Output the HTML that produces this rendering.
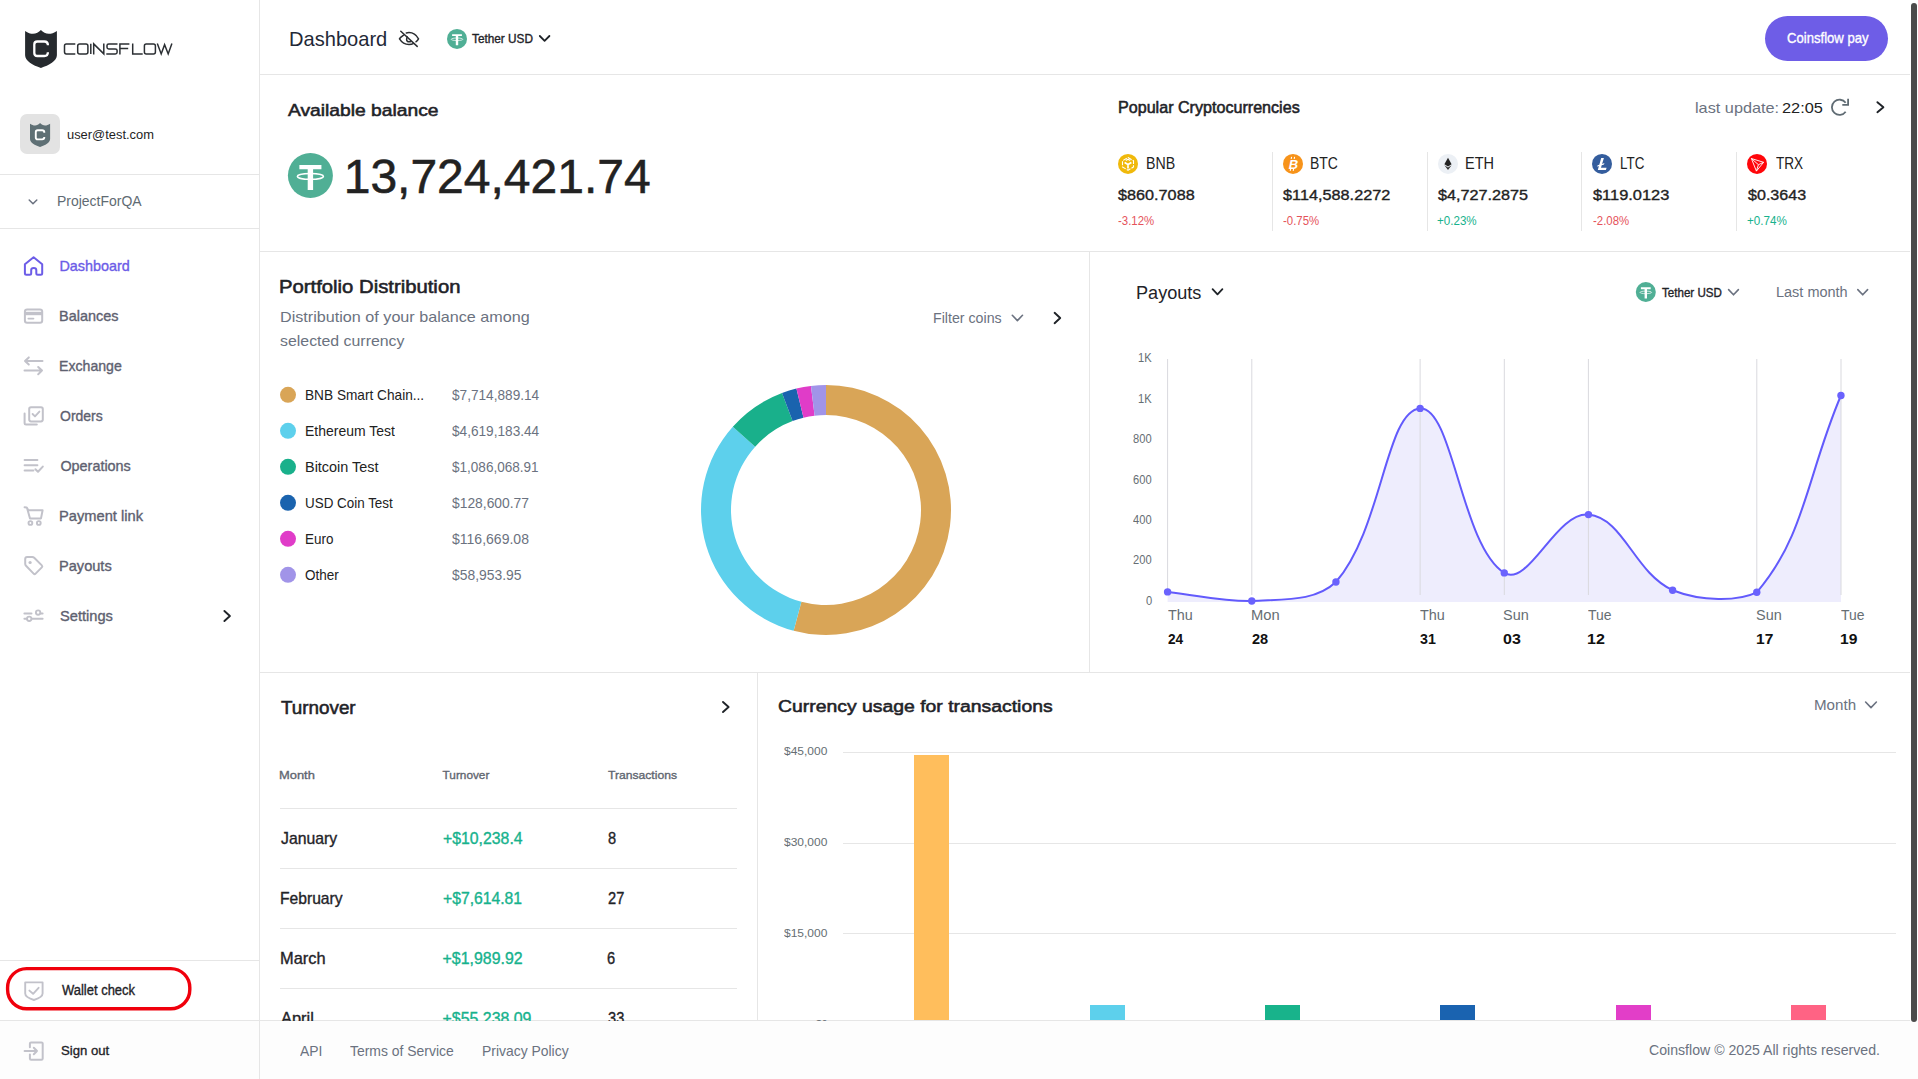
<!DOCTYPE html><html><head><meta charset="utf-8"><style>
html,body{margin:0;padding:0;}
body{width:1918px;height:1079px;overflow:hidden;background:#fff;position:relative;font-family:"Liberation Sans", sans-serif;}
.t{position:absolute;white-space:nowrap;line-height:normal;transform-origin:0 0;}
.ln{position:absolute;background:#e6e6e6;}
svg{position:absolute;overflow:visible;}
</style></head><body>

<div style="position:absolute;left:0;top:1021px;width:1918px;height:58px;background:#fdfdfd"></div>
<div class="ln" style="left:259px;top:0px;width:1px;height:1079px;background:#e6e6e6"></div>
<div class="ln" style="left:0px;top:174px;width:259px;height:1px;background:#e6e6e6"></div>
<div class="ln" style="left:0px;top:228px;width:259px;height:1px;background:#e6e6e6"></div>
<div class="ln" style="left:0px;top:960px;width:259px;height:1px;background:#e6e6e6"></div>
<div class="ln" style="left:0px;top:1020px;width:1910px;height:1px;background:#e6e6e6"></div>
<div class="ln" style="left:260px;top:74px;width:1650px;height:1px;background:#e6e6e6"></div>
<div class="ln" style="left:260px;top:251px;width:1650px;height:1px;background:#e6e6e6"></div>
<div class="ln" style="left:260px;top:672px;width:1650px;height:1px;background:#e6e6e6"></div>
<div class="ln" style="left:1089px;top:252px;width:1px;height:420px;background:#e6e6e6"></div>
<div class="ln" style="left:757px;top:673px;width:1px;height:347px;background:#e6e6e6"></div>
<div style="position:absolute;left:20px;top:114px;width:40px;height:40px;border-radius:7px;background:#e3e3e3"></div>
<div style="position:absolute;left:1765px;top:16px;width:123px;height:45px;border-radius:23px;background:#6e5de7"></div>
<div class="ln" style="left:1272px;top:152px;width:1px;height:79px;background:#e6e6e6"></div>
<div class="ln" style="left:1427px;top:152px;width:1px;height:79px;background:#e6e6e6"></div>
<div class="ln" style="left:1581px;top:152px;width:1px;height:79px;background:#e6e6e6"></div>
<div class="ln" style="left:1736px;top:152px;width:1px;height:79px;background:#e6e6e6"></div>
<div class="ln" style="left:280px;top:808px;width:457px;height:1px;background:#e6e6e6"></div>
<div class="ln" style="left:280px;top:868px;width:457px;height:1px;background:#e6e6e6"></div>
<div class="ln" style="left:280px;top:928px;width:457px;height:1px;background:#e6e6e6"></div>
<div class="ln" style="left:280px;top:988px;width:457px;height:1px;background:#e6e6e6"></div>
<div class="ln" style="left:843px;top:752px;width:1053px;height:1px;background:#e6e6e6"></div>
<div class="ln" style="left:843px;top:843px;width:1053px;height:1px;background:#e6e6e6"></div>
<div class="ln" style="left:843px;top:933px;width:1053px;height:1px;background:#e6e6e6"></div>
<div class="ln" style="left:843px;top:1024px;width:1053px;height:1px;background:#e6e6e6"></div>
<div style="position:absolute;left:914.2px;top:755px;width:35px;height:265px;background:#ffbe5c"></div>
<div style="position:absolute;left:1089.6px;top:1005px;width:35px;height:15px;background:#5dd0ec"></div>
<div style="position:absolute;left:1265.0px;top:1005px;width:35px;height:15px;background:#18b38b"></div>
<div style="position:absolute;left:1440.4px;top:1005px;width:35px;height:15px;background:#1a63b0"></div>
<div style="position:absolute;left:1615.8px;top:1005px;width:35px;height:15px;background:#e23ec8"></div>
<div style="position:absolute;left:1791.2px;top:1005px;width:35px;height:15px;background:#ff6384"></div>
<div style="position:absolute;left:1911px;top:3px;width:6px;height:1019px;border-radius:3px;background:#4b4b4b"></div>
<svg width="1918" height="1079" style="left:0;top:0"><path d="M25.1,30.9 C28,32.8 30.5,33.8 33,33.8 C36,33.8 38.8,32 40.9,29.9 C43,32 45.8,33.8 48.8,33.8 C51.3,33.8 54,32.8 56.9,30.9 L56.9,55.3 C56.9,61 49,65.5 40.9,67.9 C32.8,65.5 25.1,61 25.1,55.3 Z" fill="#262a2e"/><path d="M47.9,45.3 Q47.9,41.5 44.3,41.5 L37.3,41.5 Q34.3,41.5 34.3,44.5 L34.3,53 Q34.3,56 37.3,56 L44.3,56 Q47.9,56 47.9,52.3" fill="none" stroke="#fff" stroke-width="2.3"/><path d="M75.3,43.9 L66.3,43.9 Q64.5,43.9 64.5,45.699999999999996 L64.5,52.1 Q64.5,53.9 66.3,53.9 L75.3,53.9 M79.7,43.9 L86,43.9 Q87.9,43.9 87.9,45.9 L87.9,51.9 Q87.9,53.9 86,53.9 L79.7,53.9 Q77.7,53.9 77.7,51.9 L77.7,45.9 Q77.7,43.9 79.7,43.9 Z M90.8,43.699999999999996 L90.8,54.1 M93.7,54.4 L93.7,43.9 L103.8,53.9 L103.8,43.4 M117.5,43.9 L108.8,43.9 Q107,43.9 107,45.5 L107,47.3 Q107,48.9 108.8,48.9 L115.3,48.9 Q117.1,48.9 117.1,50.5 L117.1,52.3 Q117.1,53.9 115.3,53.9 L106.3,53.9 M119.9,54.4 L119.9,43.9 L129.4,43.9 M119.9,48.6 L128.2,48.6 M132.7,43.4 L132.7,53.9 L142.7,53.9 M146.2,43.9 L153.5,43.9 Q155.4,43.9 155.4,45.9 L155.4,51.9 Q155.4,53.9 153.5,53.9 L146.2,53.9 Q144.4,53.9 144.4,51.9 L144.4,45.9 Q144.4,43.9 146.2,43.9 Z M157.3,43.6 L161.2,53.9 L164.6,44.699999999999996 L168.2,53.9 L171.9,43.6" fill="none" stroke="#2b2f33" stroke-width="1.5" stroke-linejoin="miter"/><g transform="translate(30,123) scale(0.6286)"><path d="M0,1.2 C3,3 5.4,4 8,4 C11,4 13.9,2.1 16,0 C18.1,2.1 21,4 24,4 C26.6,4 29,3 32,1.2 L32,25.4 C32,31 24,35.6 16,38 C8,35.6 0,31 0,25.4 Z" fill="#5f7075"/><path d="M22.8,15.4 Q22.8,11.6 19.2,11.6 L12.2,11.6 Q9.2,11.6 9.2,14.6 L9.2,23.1 Q9.2,26.1 12.2,26.1 L19.2,26.1 Q22.8,26.1 22.8,22.4" fill="none" stroke="#fff" stroke-width="3"/></g><path d="M29.2,200 L33,203.8 L36.8,200" fill="none" stroke="#6b7280" stroke-width="1.5" stroke-linecap="round" stroke-linejoin="round"/><path d="M24.9,264.2 L33.6,257.2 L42.2,264.2 L42.2,273.3 Q42.2,274.8 40.7,274.8 L37.8,274.8 Q36.3,274.8 36.3,273.3 L36.3,269.9 Q36.3,267.9 33.75,267.9 Q31.2,267.9 31.2,269.9 L31.2,273.3 Q31.2,274.8 29.7,274.8 L26.4,274.8 Q24.9,274.8 24.9,273.3 Z" fill="none" stroke="#6c5ce7" stroke-width="2" stroke-linejoin="round"/><rect x="24.9" y="309.4" width="17.3" height="13.4" rx="2.2" fill="none" stroke="#c2c2ca" stroke-width="2"/><rect x="24.9" y="311.8" width="17.3" height="3.4" fill="#c2c2ca"/><path d="M28.4,318.6 L33.4,318.6" stroke="#c2c2ca" stroke-width="1.9" stroke-linecap="round"/><path d="M42.5,361 L25,361 M28.8,357.4 L25,361 L28.8,364.6 M24.5,370.6 L42,370.6 M38.2,367 L42,370.6 L38.2,374.2" fill="none" stroke="#c2c2ca" stroke-width="2" stroke-linecap="round" stroke-linejoin="round"/><rect x="29.2" y="407.2" width="13.6" height="14.2" rx="1.8" fill="none" stroke="#c2c2ca" stroke-width="2"/><path d="M24.6,413.5 L24.6,423.3 Q24.6,424.6 25.9,424.6 L36.8,424.6" fill="none" stroke="#c2c2ca" stroke-width="2" stroke-linecap="round"/><path d="M32.6,414 L35,416.4 L39.4,411.6" fill="none" stroke="#c2c2ca" stroke-width="1.9" stroke-linecap="round" stroke-linejoin="round"/><path d="M24.6,460 L37.4,460 M24.6,465.2 L37.4,465.2 M24.6,470.6 L33.4,470.6 M35.4,469.2 L38,471.8 L42.8,466.6" fill="none" stroke="#c2c2ca" stroke-width="2" stroke-linecap="round" stroke-linejoin="round"/><path d="M24.6,507.2 L26.6,507.4 L28.4,510.2 L42.6,510.2 L41,518.4 L30,518.4 L27.2,508.6" fill="none" stroke="#c2c2ca" stroke-width="2" stroke-linecap="round" stroke-linejoin="round"/><circle cx="30.4" cy="523" r="1.9" fill="none" stroke="#c2c2ca" stroke-width="1.9"/><circle cx="38.8" cy="523" r="1.9" fill="none" stroke="#c2c2ca" stroke-width="1.9"/><path d="M25.2,559 L25.2,563.8 Q25.2,565 26,565.8 L33.6,573.6 Q34.6,574.6 35.6,573.6 L41.8,567.4 Q42.8,566.4 41.8,565.4 L34.2,557.8 Q33.4,557 32.2,557 L27.2,557 Q25.2,557 25.2,559 Z" fill="none" stroke="#c2c2ca" stroke-width="2" stroke-linejoin="round"/><circle cx="30.1" cy="562.5" r="1.6" fill="#c2c2ca"/><path d="M24.4,613.4 L31.5,613.4 M40.6,613.4 L42.6,613.4 M24.4,618.8 L26.8,618.8 M32.2,618.8 L42.6,618.8" fill="none" stroke="#c2c2ca" stroke-width="2" stroke-linecap="round"/><circle cx="38.1" cy="612.6" r="2.2" fill="none" stroke="#c2c2ca" stroke-width="1.9"/><circle cx="29.2" cy="618.8" r="2.2" fill="none" stroke="#c2c2ca" stroke-width="1.9"/><path d="M224.4,611 L229.9,616 L224.4,621" fill="none" stroke="#1f2328" stroke-width="1.9" stroke-linecap="round" stroke-linejoin="round"/><rect x="7.6" y="968.6" width="182.2" height="40.2" rx="19" fill="none" stroke="#f0000c" stroke-width="3.4"/><path d="M25.2,982.4 L42.6,982.4 L42.6,993.6 Q42.6,997.4 33.9,1000 Q25.2,997.4 25.2,993.6 Z" fill="none" stroke="#c2c2ca" stroke-width="1.9" stroke-linejoin="round"/><path d="M29.4,990.6 L33.1,993.8 L38.6,987.8" fill="none" stroke="#c2c2ca" stroke-width="1.9" stroke-linecap="round" stroke-linejoin="round"/><path d="M29.9,1047.2 L29.9,1043.6 Q29.9,1042.4 31.1,1042.4 L41.5,1042.4 Q42.7,1042.4 42.7,1043.6 L42.7,1058.6 Q42.7,1059.8 41.5,1059.8 L31.1,1059.8 Q29.9,1059.8 29.9,1058.6 L29.9,1054.6 M24.6,1051 L37,1051 M33.8,1047.8 L37,1051 L33.8,1054.2" fill="none" stroke="#c2c2ca" stroke-width="2" stroke-linecap="round" stroke-linejoin="round"/><path d="M400.8,31.2 L417.2,46.4" stroke="#2a2d31" stroke-width="1.5" stroke-linecap="round"/><path d="M403.6,35.2 Q400.3,37.4 399.5,38.8 Q403,44.4 409,44.4 Q411.6,44.4 413.2,43.6 M406.3,32.9 Q407.7,32.6 409,32.6 Q415,32.6 418.5,38.8 Q417.6,40.4 416,41.8" fill="none" stroke="#2a2d31" stroke-width="1.5" stroke-linecap="round"/><path d="M407.8,36.6 Q406.6,37.6 406.6,39.2 Q406.6,41.8 409.2,41.8 Q410.2,41.8 411,41.3" fill="none" stroke="#2a2d31" stroke-width="1.5"/><g transform="translate(457,38.9) scale(1.0)"><circle cx="0" cy="0" r="10" fill="#50af95"/><path d="M-4.9,-4.7 L4.9,-4.7 L4.9,-2.8 L1.2,-2.8 L1.2,6.4 L-1.2,6.4 L-1.2,-2.8 L-4.9,-2.8 Z" fill="#fff"/><ellipse cx="0" cy="0.4" rx="5.8" ry="1.3" fill="none" stroke="#fff" stroke-width="0.7"/></g><path d="M539.8,36 L544.6,40.8 L549.4,36" fill="none" stroke="#1f2328" stroke-width="1.8" stroke-linecap="round" stroke-linejoin="round"/><path d="M1845.65,111.77 A7.6,7.6 0 1 1 1845.65,102.83" fill="none" stroke="#5f6b73" stroke-width="1.8"/><path d="M1842.3,104.8 L1848.1,104.8 L1848.1,98.8" fill="none" stroke="#5f6b73" stroke-width="1.8" stroke-linejoin="miter"/><path d="M1877.4,102.2 L1883.4,107.2 L1877.4,112.2" fill="none" stroke="#1f2328" stroke-width="1.9" stroke-linecap="round" stroke-linejoin="round"/><g transform="translate(310.4,175.5) scale(2.25)"><circle cx="0" cy="0" r="10" fill="#50af95"/><path d="M-4.9,-4.7 L4.9,-4.7 L4.9,-2.8 L1.2,-2.8 L1.2,6.4 L-1.2,6.4 L-1.2,-2.8 L-4.9,-2.8 Z" fill="#fff"/><ellipse cx="0" cy="0.4" rx="5.8" ry="1.3" fill="none" stroke="#fff" stroke-width="0.7"/></g><g transform="translate(1128,163.9)"><circle r="10" fill="#f0b90b"/><g fill="none" stroke="#fff" stroke-linejoin="round"><path d="M0,-6.3 L5.5,-3.15 L5.5,3.15 L0,6.3 L-5.5,3.15 L-5.5,-3.15 Z" stroke-width="1.1" stroke-dasharray="4.2 1.2"/><path d="M0,0.6 L0,4.6 M0,0.6 L-3.4,-1.4 M0,0.6 L3.4,-1.4" stroke-width="1.7"/><path d="M-2.2,-3.4 L0,-4.6 L2.2,-3.4" stroke-width="1.2"/></g></g><g transform="translate(1293,163.9)"><circle r="10" fill="#f7931a"/><text x="0.6" y="4.6" text-anchor="middle" font-family="Liberation Sans" font-weight="700" font-size="13" fill="#fff" transform="skewX(-12)">B</text><path d="M-1.4,-7 L-1.8,-5 M1.6,-7 L1.2,-5 M-2.4,5 L-2.8,7 M0.6,5 L0.2,7" stroke="#fff" stroke-width="1.1"/></g><g transform="translate(1448,163.9)"><circle r="10" fill="#ecf0f5"/><path d="M0,-6.2 L-3.6,0.4 L0,2.6 L3.6,0.4 Z" fill="#222"/><path d="M-3.6,1.4 L0,6.2 L3.6,1.4 L0,3.6 Z" fill="#333"/></g><g transform="translate(1602,163.9)"><circle r="10" fill="#345d9d"/><path d="M-0.8,-6 L1.9,-6 L0.1,0 L2.4,-0.8 L2.0,0.6 L-0.3,1.4 L-1.0,3.9 L4.6,3.9 L3.9,6.2 L-4.2,6.2 L-3.1,2.2 L-4.8,2.8 L-4.4,1.4 L-2.7,0.8 Z" fill="#fff"/></g><g transform="translate(1757,163.9)"><circle r="10" fill="#ff060a"/><path d="M-5.6,-5.4 L6.6,-1.6 L-0.6,7.2 Z M-5.6,-5.4 L1.4,0.8 L6.6,-1.6 M1.4,0.8 L-0.6,7.2" fill="none" stroke="#fff" stroke-width="0.9" stroke-linejoin="round"/></g><circle cx="288" cy="394.8" r="8" fill="#d9a557"/><circle cx="288" cy="430.8" r="8" fill="#5dd0ec"/><circle cx="288" cy="466.8" r="8" fill="#19b08b"/><circle cx="288" cy="502.8" r="8" fill="#1a63ae"/><circle cx="288" cy="538.8" r="8" fill="#e03cc8"/><circle cx="288" cy="574.8" r="8" fill="#a194e8"/><path d="M1012.3,315.3 L1017.4,320.6 L1022.5,315.3" fill="none" stroke="#6b7280" stroke-width="1.6" stroke-linecap="round" stroke-linejoin="round"/><path d="M1054.6,312.8 L1060.2,318 L1054.6,323.2" fill="none" stroke="#1f2328" stroke-width="1.9" stroke-linecap="round" stroke-linejoin="round"/><path d="M826.00,385.00 A125,125 0 1 1 793.65,630.74 L801.41,601.76 A95,95 0 1 0 826.00,415.00 Z" fill="#d9a557"/><path d="M793.65,630.74 A125,125 0 0 1 732.82,426.68 L755.18,446.68 A95,95 0 0 0 801.41,601.76 Z" fill="#5dd0ec"/><path d="M732.82,426.68 A125,125 0 0 1 782.02,392.99 L792.58,421.07 A95,95 0 0 0 755.18,446.68 Z" fill="#19b08b"/><path d="M782.02,392.99 A125,125 0 0 1 796.40,388.56 L803.50,417.70 A95,95 0 0 0 792.58,421.07 Z" fill="#1a63ae"/><path d="M796.40,388.56 A125,125 0 0 1 810.98,385.91 L814.59,415.69 A95,95 0 0 0 803.50,417.70 Z" fill="#e03cc8"/><path d="M810.98,385.91 A125,125 0 0 1 826.00,385.00 L826.00,415.00 A95,95 0 0 0 814.59,415.69 Z" fill="#a194e8"/><path d="M1212.6,289.2 L1217.5,294.4 L1222.4,289.2" fill="none" stroke="#1f2328" stroke-width="1.8" stroke-linecap="round" stroke-linejoin="round"/><g transform="translate(1645.8,292) scale(1.0)"><circle cx="0" cy="0" r="10" fill="#50af95"/><path d="M-4.9,-4.7 L4.9,-4.7 L4.9,-2.8 L1.2,-2.8 L1.2,6.4 L-1.2,6.4 L-1.2,-2.8 L-4.9,-2.8 Z" fill="#fff"/><ellipse cx="0" cy="0.4" rx="5.8" ry="1.3" fill="none" stroke="#fff" stroke-width="0.7"/></g><path d="M1728.6,289.6 L1733.5,294.8 L1738.4,289.6" fill="none" stroke="#6b7280" stroke-width="1.6" stroke-linecap="round" stroke-linejoin="round"/><path d="M1857.8,289.6 L1862.7,294.8 L1867.6,289.6" fill="none" stroke="#6b7280" stroke-width="1.6" stroke-linecap="round" stroke-linejoin="round"/><path d="M1167.60,591.90 C1201.27,595.54 1218.42,601.50 1251.77,601.00 C1285.76,599.00 1315.13,601.50 1335.94,582.00 C1382.47,528.77 1385.72,410.26 1420.11,408.40 C1453.05,406.62 1460.95,545.57 1504.28,572.90 C1528.29,588.05 1556.46,511.31 1588.45,514.60 C1623.80,518.23 1634.01,572.38 1672.62,590.20 C1701.35,601.50 1737.78,601.50 1756.79,592.30 C1805.12,536.41 1807.29,474.22 1840.96,395.50 L1840.96,602.00 L1167.60,602.00 Z" fill="#eeedfd"/><path d="M1167.6,359 L1167.6,595" stroke="#d9d9de" stroke-width="1"/><path d="M1251.8,359 L1251.8,595" stroke="#d9d9de" stroke-width="1"/><path d="M1420.1,359 L1420.1,595" stroke="#d9d9de" stroke-width="1"/><path d="M1504.3,359 L1504.3,595" stroke="#d9d9de" stroke-width="1"/><path d="M1588.4,359 L1588.4,595" stroke="#d9d9de" stroke-width="1"/><path d="M1756.8,359 L1756.8,595" stroke="#d9d9de" stroke-width="1"/><path d="M1841.0,359 L1841.0,595" stroke="#d9d9de" stroke-width="1"/><path d="M1167.60,591.90 C1201.27,595.54 1218.42,601.50 1251.77,601.00 C1285.76,599.00 1315.13,601.50 1335.94,582.00 C1382.47,528.77 1385.72,410.26 1420.11,408.40 C1453.05,406.62 1460.95,545.57 1504.28,572.90 C1528.29,588.05 1556.46,511.31 1588.45,514.60 C1623.80,518.23 1634.01,572.38 1672.62,590.20 C1701.35,601.50 1737.78,601.50 1756.79,592.30 C1805.12,536.41 1807.29,474.22 1840.96,395.50" fill="none" stroke="#625afc" stroke-width="2"/><circle cx="1167.60" cy="591.90" r="3.7" fill="#6a62fd"/><circle cx="1251.77" cy="601.00" r="3.7" fill="#6a62fd"/><circle cx="1335.94" cy="582.00" r="3.7" fill="#6a62fd"/><circle cx="1420.11" cy="408.40" r="3.7" fill="#6a62fd"/><circle cx="1504.28" cy="572.90" r="3.7" fill="#6a62fd"/><circle cx="1588.45" cy="514.60" r="3.7" fill="#6a62fd"/><circle cx="1672.62" cy="590.20" r="3.7" fill="#6a62fd"/><circle cx="1756.79" cy="592.30" r="3.7" fill="#6a62fd"/><circle cx="1840.96" cy="395.50" r="3.7" fill="#6a62fd"/><path d="M723,702 L728.6,707 L723,712" fill="none" stroke="#1f2328" stroke-width="1.9" stroke-linecap="round" stroke-linejoin="round"/><path d="M1865.6,702 L1871,707.6 L1876.4,702" fill="none" stroke="#6b7280" stroke-width="1.6" stroke-linecap="round" stroke-linejoin="round"/></svg>
<div class="t" style="left:67.33px;top:128.00px;font-size:12.00px;color:#1e1e1e;transform:scaleX(1.0747);">user@test.com</div>
<div class="t" style="left:56.99px;top:194.00px;font-size:13.80px;color:#5f6b73;transform:scaleX(1.0122);">ProjectForQA</div>
<div class="t" style="left:59.40px;top:258.00px;font-size:14.40px;color:#6c5ce7;-webkit-text-stroke:0.35px #6c5ce7;">Dashboard</div>
<div class="t" style="left:59.39px;top:308.00px;font-size:14.40px;color:#5e6170;-webkit-text-stroke:0.35px #5e6170;transform:scaleX(1.0052);">Balances</div>
<div class="t" style="left:59.42px;top:358.00px;font-size:14.40px;color:#5e6170;-webkit-text-stroke:0.35px #5e6170;transform:scaleX(0.9810);">Exchange</div>
<div class="t" style="left:60.40px;top:408.00px;font-size:14.40px;color:#5e6170;-webkit-text-stroke:0.35px #5e6170;transform:scaleX(0.9727);">Orders</div>
<div class="t" style="left:60.40px;top:458.00px;font-size:14.40px;color:#5e6170;-webkit-text-stroke:0.35px #5e6170;">Operations</div>
<div class="t" style="left:59.38px;top:508.00px;font-size:14.40px;color:#5e6170;-webkit-text-stroke:0.35px #5e6170;transform:scaleX(1.0195);">Payment link</div>
<div class="t" style="left:59.39px;top:558.00px;font-size:14.40px;color:#5e6170;-webkit-text-stroke:0.35px #5e6170;transform:scaleX(1.0137);">Payouts</div>
<div class="t" style="left:60.40px;top:608.00px;font-size:14.40px;color:#5e6170;-webkit-text-stroke:0.35px #5e6170;transform:scaleX(1.0173);">Settings</div>
<div class="t" style="left:61.70px;top:982.00px;font-size:14.00px;color:#1f2328;-webkit-text-stroke:0.35px #1f2328;transform:scaleX(0.9266);">Wallet check</div>
<div class="t" style="left:288.70px;top:27.00px;font-size:21.10px;color:#1f2937;transform:scaleX(0.9520);">Dashboard</div>
<div class="t" style="left:472.00px;top:32.00px;font-size:11.90px;color:#1f2328;-webkit-text-stroke:0.35px #1f2328;transform:scaleX(0.9918);">Tether USD</div>
<div class="t" style="left:1786.80px;top:30.00px;font-size:14.30px;color:#ffffff;-webkit-text-stroke:0.35px #ffffff;transform:scaleX(0.9169);">Coinsflow pay</div>
<div class="t" style="left:288.30px;top:101.00px;font-size:16.60px;color:#1f2328;-webkit-text-stroke:0.55px #1f2328;transform:scaleX(1.1597);">Available balance</div>
<div class="t" style="left:343.70px;top:149.00px;font-size:48.00px;color:#222222;-webkit-text-stroke:0.55px #222222;">13,724,421.74</div>
<div class="t" style="left:1117.89px;top:99.00px;font-size:15.90px;color:#1f2328;-webkit-text-stroke:0.55px #1f2328;transform:scaleX(1.0135);">Popular Cryptocurrencies</div>
<div class="t" style="left:1695.08px;top:100.00px;font-size:14.60px;color:#6b7280;transform:scaleX(1.1151);">last update:</div>
<div class="t" style="left:1781.74px;top:99.00px;font-size:15.40px;color:#222222;transform:scaleX(1.0622);">22:05</div>
<div class="t" style="left:1145.59px;top:155.00px;font-size:15.60px;color:#222222;transform:scaleX(0.9097);">BNB</div>
<div class="t" style="left:1310.40px;top:155.00px;font-size:15.60px;color:#222222;transform:scaleX(0.8967);">BTC</div>
<div class="t" style="left:1465.17px;top:155.00px;font-size:15.60px;color:#222222;transform:scaleX(0.9310);">ETH</div>
<div class="t" style="left:1620.24px;top:155.00px;font-size:15.60px;color:#222222;transform:scaleX(0.8593);">LTC</div>
<div class="t" style="left:1775.50px;top:155.00px;font-size:15.60px;color:#222222;transform:scaleX(0.8710);">TRX</div>
<div class="t" style="left:1118.30px;top:187.00px;font-size:14.70px;color:#222222;-webkit-text-stroke:0.35px #222222;transform:scaleX(1.1043);">$860.7088</div>
<div class="t" style="left:1283.10px;top:187.00px;font-size:14.70px;color:#222222;-webkit-text-stroke:0.35px #222222;transform:scaleX(1.1072);">$114,588.2272</div>
<div class="t" style="left:1438.00px;top:187.00px;font-size:14.70px;color:#222222;-webkit-text-stroke:0.35px #222222;transform:scaleX(1.1025);">$4,727.2875</div>
<div class="t" style="left:1593.00px;top:187.00px;font-size:14.70px;color:#222222;-webkit-text-stroke:0.35px #222222;transform:scaleX(1.1162);">$119.0123</div>
<div class="t" style="left:1747.70px;top:187.00px;font-size:14.70px;color:#222222;-webkit-text-stroke:0.35px #222222;transform:scaleX(1.0943);">$0.3643</div>
<div class="t" style="left:1118.30px;top:214.00px;font-size:12.40px;color:#e5535b;transform:scaleX(0.9205);">-3.12%</div>
<div class="t" style="left:1283.10px;top:214.00px;font-size:12.40px;color:#e5535b;transform:scaleX(0.9205);">-0.75%</div>
<div class="t" style="left:1437.06px;top:214.00px;font-size:12.40px;color:#17b28d;transform:scaleX(0.9366);">+0.23%</div>
<div class="t" style="left:1593.00px;top:214.00px;font-size:12.40px;color:#e5535b;transform:scaleX(0.9205);">-2.08%</div>
<div class="t" style="left:1746.76px;top:214.00px;font-size:12.40px;color:#17b28d;transform:scaleX(0.9415);">+0.74%</div>
<div class="t" style="left:278.97px;top:277.00px;font-size:18.00px;color:#1f2328;-webkit-text-stroke:0.55px #1f2328;transform:scaleX(1.1264);">Portfolio Distribution</div>
<div class="t" style="left:279.52px;top:308.00px;font-size:15.00px;color:#6b7280;transform:scaleX(1.0774);">Distribution of your balance among</div>
<div class="t" style="left:279.54px;top:332.00px;font-size:15.00px;color:#6b7280;transform:scaleX(1.0590);">selected currency</div>
<div class="t" style="left:304.74px;top:387.00px;font-size:14.30px;color:#222222;transform:scaleX(0.9553);">BNB Smart Chain...</div>
<div class="t" style="left:452.10px;top:387.00px;font-size:14.30px;color:#6b7280;transform:scaleX(0.9538);">$7,714,889.14</div>
<div class="t" style="left:304.72px;top:423.00px;font-size:14.30px;color:#222222;transform:scaleX(0.9769);">Ethereum Test</div>
<div class="t" style="left:452.10px;top:423.00px;font-size:14.30px;color:#6b7280;transform:scaleX(0.9538);">$4,619,183.44</div>
<div class="t" style="left:304.69px;top:459.00px;font-size:14.30px;color:#222222;transform:scaleX(1.0097);">Bitcoin Test</div>
<div class="t" style="left:452.10px;top:459.00px;font-size:14.30px;color:#6b7280;transform:scaleX(0.9473);">$1,086,068.91</div>
<div class="t" style="left:304.76px;top:495.00px;font-size:14.30px;color:#222222;transform:scaleX(0.9387);">USD Coin Test</div>
<div class="t" style="left:452.10px;top:495.00px;font-size:14.30px;color:#6b7280;transform:scaleX(0.9684);">$128,600.77</div>
<div class="t" style="left:304.76px;top:531.00px;font-size:14.30px;color:#222222;transform:scaleX(0.9414);">Euro</div>
<div class="t" style="left:452.10px;top:531.00px;font-size:14.30px;color:#6b7280;transform:scaleX(0.9808);">$116,669.08</div>
<div class="t" style="left:304.75px;top:567.00px;font-size:14.30px;color:#222222;transform:scaleX(0.9457);">Other</div>
<div class="t" style="left:452.10px;top:567.00px;font-size:14.30px;color:#6b7280;transform:scaleX(0.9718);">$58,953.95</div>
<div class="t" style="left:932.79px;top:310.00px;font-size:14.10px;color:#6b7280;transform:scaleX(1.0075);">Filter coins</div>
<div class="t" style="left:1136.47px;top:283.00px;font-size:17.60px;color:#1f2328;transform:scaleX(1.0290);">Payouts</div>
<div class="t" style="left:1661.60px;top:286.00px;font-size:12.10px;color:#1f2328;-webkit-text-stroke:0.35px #1f2328;transform:scaleX(0.9581);">Tether USD</div>
<div class="t" style="left:1776.01px;top:284.00px;font-size:14.70px;color:#6b7280;transform:scaleX(0.9859);">Last month</div>
<div class="t" style="left:1137.70px;top:351.00px;font-size:12.10px;color:#666e73;transform:scaleX(0.9200);">1K</div>
<div class="t" style="left:1137.70px;top:392.00px;font-size:12.10px;color:#666e73;transform:scaleX(0.9200);">1K</div>
<div class="t" style="left:1133.10px;top:432.00px;font-size:12.10px;color:#666e73;transform:scaleX(0.9200);">800</div>
<div class="t" style="left:1133.10px;top:473.00px;font-size:12.10px;color:#666e73;transform:scaleX(0.9200);">600</div>
<div class="t" style="left:1133.10px;top:513.00px;font-size:12.10px;color:#666e73;transform:scaleX(0.9200);">400</div>
<div class="t" style="left:1133.10px;top:553.00px;font-size:12.10px;color:#666e73;transform:scaleX(0.9200);">200</div>
<div class="t" style="left:1145.98px;top:594.00px;font-size:12.10px;color:#666e73;transform:scaleX(0.9200);">0</div>
<div class="t" style="left:1167.60px;top:606.00px;font-size:15.10px;color:#666e73;transform:scaleX(0.9520);">Thu</div>
<div class="t" style="left:1167.60px;top:631.00px;font-size:14.90px;color:#111111;font-weight:700;transform:scaleX(0.9176);">24</div>
<div class="t" style="left:1250.79px;top:606.00px;font-size:15.10px;color:#666e73;transform:scaleX(0.9761);">Mon</div>
<div class="t" style="left:1251.77px;top:631.00px;font-size:14.90px;color:#111111;font-weight:700;transform:scaleX(0.9769);">28</div>
<div class="t" style="left:1420.11px;top:606.00px;font-size:15.10px;color:#666e73;transform:scaleX(0.9556);">Thu</div>
<div class="t" style="left:1420.11px;top:631.00px;font-size:14.90px;color:#111111;font-weight:700;transform:scaleX(0.9556);">31</div>
<div class="t" style="left:1503.32px;top:606.00px;font-size:15.10px;color:#666e73;transform:scaleX(0.9568);">Sun</div>
<div class="t" style="left:1503.21px;top:631.00px;font-size:14.90px;color:#111111;font-weight:700;transform:scaleX(1.0747);">03</div>
<div class="t" style="left:1588.45px;top:606.00px;font-size:15.10px;color:#666e73;transform:scaleX(0.9220);">Tue</div>
<div class="t" style="left:1587.37px;top:631.00px;font-size:14.90px;color:#111111;font-weight:700;transform:scaleX(1.0767);">12</div>
<div class="t" style="left:1755.83px;top:606.00px;font-size:15.10px;color:#666e73;transform:scaleX(0.9564);">Sun</div>
<div class="t" style="left:1755.74px;top:631.00px;font-size:14.90px;color:#111111;font-weight:700;transform:scaleX(1.0473);">17</div>
<div class="t" style="left:1840.96px;top:606.00px;font-size:15.10px;color:#666e73;transform:scaleX(0.9216);">Tue</div>
<div class="t" style="left:1839.91px;top:631.00px;font-size:14.90px;color:#111111;font-weight:700;transform:scaleX(1.0493);">19</div>
<div class="t" style="left:280.70px;top:698.00px;font-size:18.00px;color:#1f2328;-webkit-text-stroke:0.55px #1f2328;transform:scaleX(1.0458);">Turnover</div>
<div class="t" style="left:279.41px;top:768.00px;font-size:11.80px;color:#5f6670;-webkit-text-stroke:0.35px #5f6670;transform:scaleX(1.0935);">Month</div>
<div class="t" style="left:442.60px;top:768.00px;font-size:11.80px;color:#5f6670;-webkit-text-stroke:0.35px #5f6670;">Turnover</div>
<div class="t" style="left:608.10px;top:768.00px;font-size:11.80px;color:#5f6670;-webkit-text-stroke:0.35px #5f6670;transform:scaleX(1.0284);">Transactions</div>
<div class="t" style="left:280.70px;top:830.00px;font-size:15.90px;color:#1f2328;-webkit-text-stroke:0.35px #1f2328;transform:scaleX(0.9930);">January</div>
<div class="t" style="left:442.60px;top:830.00px;font-size:15.90px;color:#17b28d;-webkit-text-stroke:0.35px #17b28d;transform:scaleX(0.9950);">+$10,238.4</div>
<div class="t" style="left:608.10px;top:830.00px;font-size:15.90px;color:#1f2328;-webkit-text-stroke:0.35px #1f2328;transform:scaleX(0.9200);">8</div>
<div class="t" style="left:279.72px;top:890.00px;font-size:15.90px;color:#1f2328;-webkit-text-stroke:0.35px #1f2328;transform:scaleX(0.9841);">February</div>
<div class="t" style="left:442.60px;top:890.00px;font-size:15.90px;color:#17b28d;-webkit-text-stroke:0.35px #17b28d;transform:scaleX(0.9888);">+$7,614.81</div>
<div class="t" style="left:608.10px;top:890.00px;font-size:15.90px;color:#1f2328;-webkit-text-stroke:0.35px #1f2328;transform:scaleX(0.9200);">27</div>
<div class="t" style="left:279.67px;top:950.00px;font-size:15.90px;color:#1f2328;-webkit-text-stroke:0.35px #1f2328;transform:scaleX(1.0302);">March</div>
<div class="t" style="left:442.60px;top:950.00px;font-size:15.90px;color:#17b28d;-webkit-text-stroke:0.35px #17b28d;">+$1,989.92</div>
<div class="t" style="left:607.18px;top:950.00px;font-size:15.90px;color:#1f2328;-webkit-text-stroke:0.35px #1f2328;transform:scaleX(0.9200);">6</div>
<div class="t" style="left:280.70px;top:1010.00px;font-size:15.90px;color:#1f2328;-webkit-text-stroke:0.35px #1f2328;transform:scaleX(1.0323);">April</div>
<div class="t" style="left:442.60px;top:1010.00px;font-size:15.90px;color:#17b28d;-webkit-text-stroke:0.35px #17b28d;">+$55,238.09</div>
<div class="t" style="left:608.10px;top:1010.00px;font-size:15.90px;color:#1f2328;-webkit-text-stroke:0.35px #1f2328;transform:scaleX(0.9200);">33</div>
<div class="t" style="left:778.10px;top:697.00px;font-size:16.90px;color:#1f2328;-webkit-text-stroke:0.55px #1f2328;transform:scaleX(1.1473);">Currency usage for transactions</div>
<div class="t" style="left:1813.98px;top:697.00px;font-size:14.80px;color:#6b7280;transform:scaleX(1.0231);">Month</div>
<div class="t" style="left:783.90px;top:745.00px;font-size:11.20px;color:#666e73;transform:scaleX(1.0725);">$45,000</div>
<div class="t" style="left:783.90px;top:836.00px;font-size:11.20px;color:#666e73;transform:scaleX(1.0725);">$30,000</div>
<div class="t" style="left:783.90px;top:927.00px;font-size:11.20px;color:#666e73;transform:scaleX(1.0725);">$15,000</div>
<div class="t" style="left:815.76px;top:1018.00px;font-size:11.20px;color:#666e73;transform:scaleX(0.9200);">$0</div>
<div style="position:absolute;left:260px;top:1021px;width:1650px;height:58px;background:#fdfdfd"></div>
<div class="t" style="left:60.73px;top:1043.00px;font-size:13.60px;color:#1f2328;-webkit-text-stroke:0.35px #1f2328;transform:scaleX(0.9673);">Sign out</div>
<div class="t" style="left:300.30px;top:1043.00px;font-size:14.50px;color:#6b7280;transform:scaleX(0.9591);">API</div>
<div class="t" style="left:350.20px;top:1043.00px;font-size:14.50px;color:#6b7280;transform:scaleX(0.9611);">Terms of Service</div>
<div class="t" style="left:481.84px;top:1043.00px;font-size:14.50px;color:#6b7280;transform:scaleX(0.9596);">Privacy Policy</div>
<div class="t" style="left:1649.25px;top:1042.00px;font-size:14.80px;color:#6b7280;transform:scaleX(0.9542);">Coinsflow © 2025 All rights reserved.</div>
</body></html>
